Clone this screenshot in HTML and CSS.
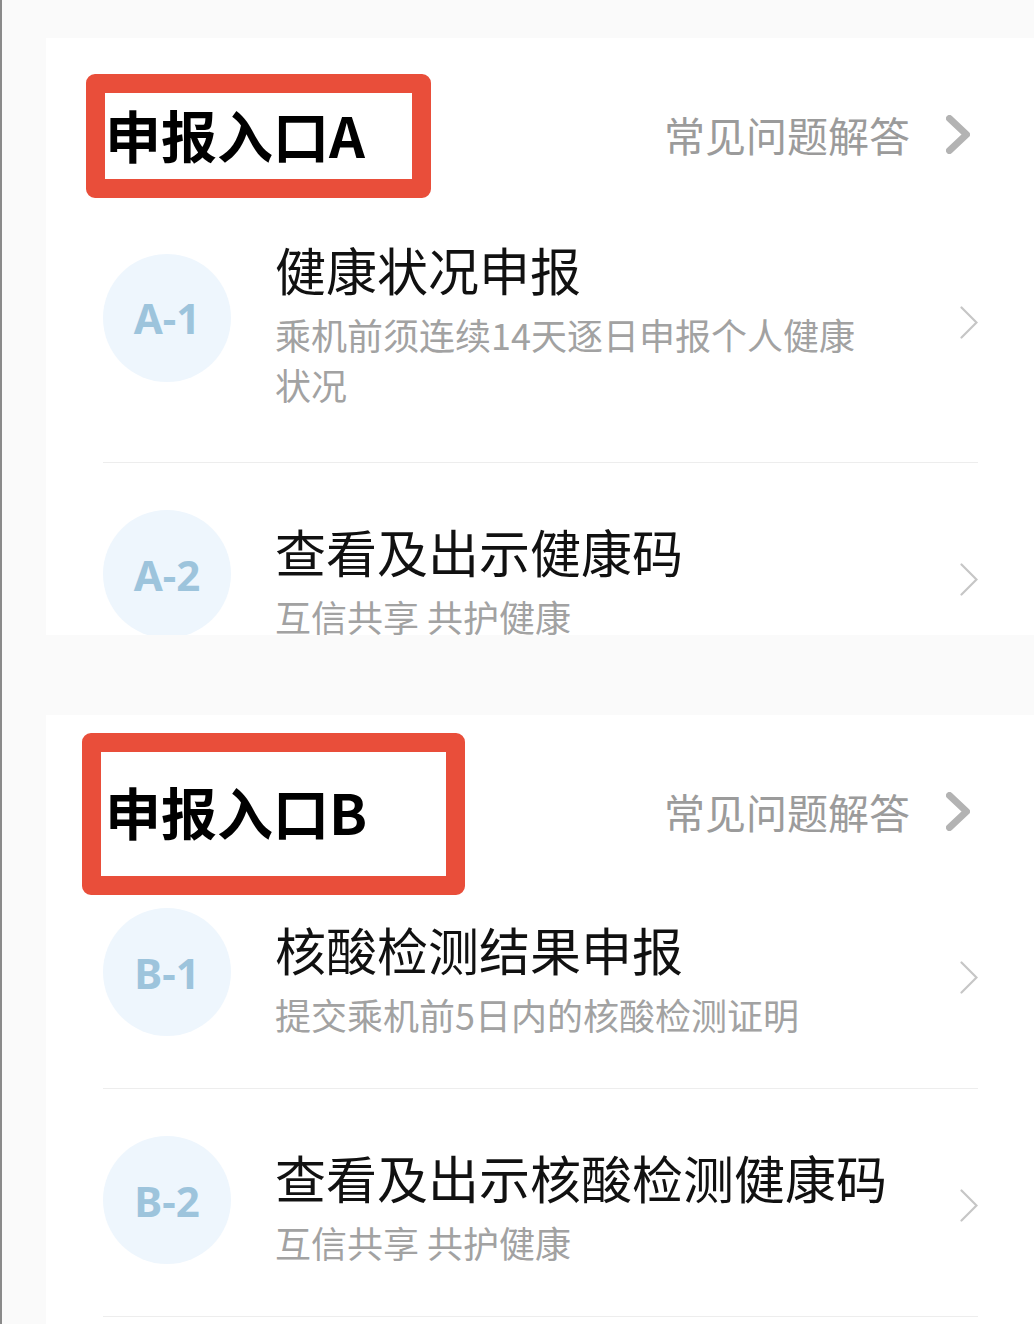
FILE: index.html
```html
<!DOCTYPE html>
<html lang="zh-CN">
<head>
    <meta charset="UTF-8">
    <meta name="viewport" content="width=device-width, initial-scale=1.0">
    <title>申报入口</title>
    <link rel="stylesheet" href="styles.css">
</head>
<body>

    <div class="card card-a">
        <div class="card-head">
            <h2 class="entry entry-a">申报入口A</h2>
            <a class="faq" href="#">常见问题解答
                <svg class="faq-arrow" width="24" height="39" viewBox="0 0 24 39"><path d="M3.5 3.5 L20.5 19.5 L3.5 35.5" /></svg>
            </a>
        </div>

        <div class="item item-wrap">
            <div class="badge">A-1</div>
            <div class="text">
                <p class="title">健康状况申报</p>
                <p class="desc">乘机前须连续14天逐日申报个人健康状况</p>
            </div>
            <svg class="arrow" width="18" height="33" viewBox="0 0 18 33"><path d="M1.5 1.5 L16.5 16.5 L1.5 31.5" /></svg>
        </div>

        <div class="item">
            <div class="badge">A-2</div>
            <div class="text">
                <p class="title">查看及出示健康码</p>
                <p class="desc">互信共享 共护健康</p>
            </div>
            <svg class="arrow" width="18" height="33" viewBox="0 0 18 33"><path d="M1.5 1.5 L16.5 16.5 L1.5 31.5" /></svg>
        </div>
    </div>

    <div class="card card-b">
        <div class="card-head">
            <h2 class="entry entry-b">申报入口B</h2>
            <a class="faq" href="#">常见问题解答
                <svg class="faq-arrow" width="24" height="39" viewBox="0 0 24 39"><path d="M3.5 3.5 L20.5 19.5 L3.5 35.5" /></svg>
            </a>
        </div>

        <div class="item">
            <div class="badge">B-1</div>
            <div class="text">
                <p class="title">核酸检测结果申报</p>
                <p class="desc">提交乘机前5日内的核酸检测证明</p>
            </div>
            <svg class="arrow" width="18" height="33" viewBox="0 0 18 33"><path d="M1.5 1.5 L16.5 16.5 L1.5 31.5" /></svg>
        </div>

        <div class="item">
            <div class="badge">B-2</div>
            <div class="text">
                <p class="title">查看及出示核酸检测健康码</p>
                <p class="desc">互信共享 共护健康</p>
            </div>
            <svg class="arrow" width="18" height="33" viewBox="0 0 18 33"><path d="M1.5 1.5 L16.5 16.5 L1.5 31.5" /></svg>
        </div>
    </div>

</body>
</html>
```

FILE: styles.css
```css
body {
  margin: 0;
  background-color: #fafafa;
  border-left: 2px solid #8a8a8a;
  font-family: "Noto Sans CJK SC", "Noto Sans", sans-serif;
  color: #111;
}

.card {
  margin-left: 44px;
  background-color: #fff;
  overflow: hidden;
}

.card-a {
  margin-top: 38px;
  height: 597px;
}

.card-b {
  margin-top: 80px;
  height: 609px;
}

/* head of each block: title + faq link */
.card-head {
  display: flex;
  align-items: center;
  justify-content: space-between;
  height: 92px;
  padding: 50px 64px 4px 59px;
}

.entry {
  position: relative;
  margin: 0;
  font-size: 56px;
  line-height: 64px;
  font-weight: 700;
  color: #000;
}

/* red annotation frame over the title */
.entry::before {
  content: "";
  position: absolute;
  box-sizing: border-box;
  border: 19px solid #e94e3a;
  border-radius: 9px;
}

.entry-a::before {
  left: -19px;
  top: -28px;
  width: 345px;
  height: 124px;
}

.entry-b::before {
  left: -23px;
  top: -46px;
  width: 383px;
  height: 162px;
}

.faq {
  display: flex;
  align-items: center;
  gap: 36px;
  font-size: 41px;
  line-height: 60px;
  color: #9b9b9b;
  text-decoration: none;
}

.faq-arrow path {
  fill: none;
  stroke: #b3b3b3;
  stroke-width: 7;
  stroke-linecap: round;
  stroke-linejoin: round;
}

/* list rows */
.item {
  display: flex;
  align-items: center;
  margin: 0 56px 0 57px;
  padding: 52px 0 47px;
  border-bottom: 1px solid #ededed;
}

.item-wrap {
  padding-bottom: 53px;
}

.badge {
  flex: none;
  width: 128px;
  height: 128px;
  margin: -5px 0 5px;
  border-radius: 50%;
  background-color: #eef6fd;
  color: #9dc4dc;
  font-family: "Noto Sans", sans-serif;
  font-weight: 700;
  font-size: 42px;
  display: flex;
  align-items: center;
  justify-content: center;
}

.text {
  flex: 1;
  margin-left: 44px;
}

.title {
  margin: 0;
  font-size: 51px;
  line-height: 66px;
  white-space: nowrap;
  color: #111;
}

.desc {
  max-width: 594px;
  margin: 7px 0 0;
  font-size: 36px;
  line-height: 50px;
  color: #a2a2a2;
}

.arrow {
  flex: none;
}

.arrow path {
  fill: none;
  stroke: #c6c6c6;
  stroke-width: 2.2;
  stroke-linecap: round;
}
```
